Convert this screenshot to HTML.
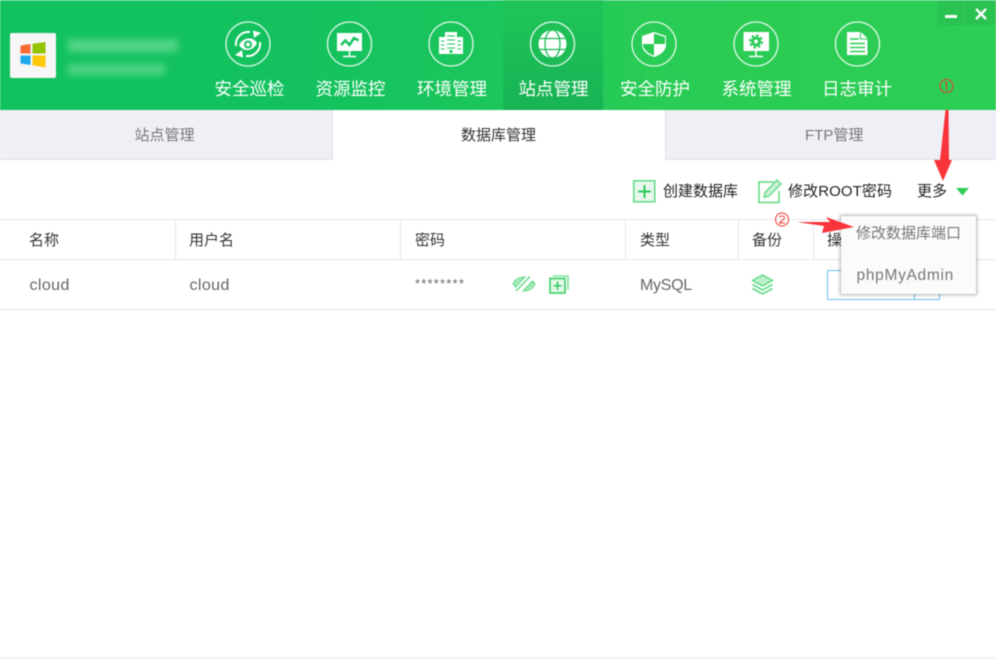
<!DOCTYPE html>
<html lang="zh"><head><meta charset="utf-8"><title>数据库管理</title>
<style>
html,body{margin:0;padding:0;background:#fff}
body{width:996px;height:669px;position:relative;overflow:hidden;font-family:"Liberation Sans","Noto Sans CJK SC",sans-serif;color:#333}
#wrap{position:absolute;left:0;top:0;width:996px;height:669px;filter:blur(.45px)}
.a{position:absolute;white-space:nowrap}
.t{position:absolute;white-space:nowrap;font-size:15px;line-height:20px}
.nav{position:absolute;top:78px;width:102px;text-align:center;color:#fff;font-size:17.5px;line-height:22px;white-space:nowrap}
.ln{position:absolute;background:#e6e8f0}
svg{position:absolute;overflow:visible}
.g{color:#666}
</style></head><body><div id="wrap">
<div class="a" style="left:0;top:0;width:996px;height:110px;background:linear-gradient(90deg,#12c25f 0%,#13c25f 30%,#1cc65c 50%,#29cc55 65%,#2dce54 100%)"></div>
<div class="a" style="left:0;top:0;width:996px;height:1px;background:#4fd08a"></div>
<div class="a" style="left:503px;top:0;width:100px;height:110px;background:linear-gradient(180deg,#20c558 0%,#18b355 100%)"></div>
<div class="a" style="left:938px;top:1px;width:25px;height:24px;background:#2ac251"></div>
<div class="a" style="left:964px;top:1px;width:32px;height:24px;background:#2ac251"></div>
<div class="a" style="left:945px;top:15px;width:12px;height:3px;background:#fff"></div>
<svg style="left:975px;top:8px" width="12" height="12" viewBox="0 0 12 12"><path d="M1 1L11 11M11 1L1 11" stroke="#fff" stroke-width="2.4"/></svg>
<div class="a" style="left:10px;top:33px;width:46px;height:45px;background:#f6f6f6;border-radius:2px"></div>
<svg style="left:20px;top:42px" width="26" height="26" viewBox="0 0 26 26"><path d="M0.500 3.500L10.500 2V11.500H0.500Z" fill="#f86b35"/><path d="M12.500 1.800L25.500 0V11.500H12.500Z" fill="#92c400"/><path d="M0.500 13.500H10.500V23L0.500 21.500Z" fill="#1ea9ee"/><path d="M12.500 13.500H25.500V25.500L12.500 23.300Z" fill="#ffc80a"/></svg>
<div class="a" style="left:68px;top:39px;width:110px;height:13px;background:#6edc9c;filter:blur(3.5px);opacity:.7"></div>
<div class="a" style="left:68px;top:64px;width:97px;height:11px;background:#6edc9c;filter:blur(3.5px);opacity:.65"></div>
<svg style="left:0;top:0" width="996" height="110" viewBox="0 0 996 110" fill="none" stroke="#fff" stroke-opacity=".85" stroke-width="1.300">
<circle cx="248" cy="44" r="22"/><circle cx="349.500" cy="44" r="22"/><circle cx="451" cy="44" r="22"/><circle cx="552.500" cy="44" r="22"/><circle cx="654" cy="44" r="22"/><circle cx="756" cy="44" r="22"/><circle cx="857.500" cy="44" r="22"/>
<g stroke-opacity="1">
<path d="M236 46a12.500 12.500 0 0 1 14-14M260 42a12.500 12.500 0 0 1-14 14" stroke-width="2"/>
<path d="M253 30.500L261 33 254 38ZM243 57.500L235 55 242 50Z" fill="#fff" stroke="none"/>
<path d="M239 45C243 37 253 36 257 43C253 52 243 52 239 45Z" fill="#fff" stroke="none"/>
<circle cx="248" cy="44.500" r="3" stroke="#14c35f" stroke-width="2"/>
<path d="M337 33H362V51H337Z" fill="#fff" stroke="none"/>
<path d="M349.500 51V56M343 56.500H356" stroke-width="1.500"/>
<path d="M341 45L345.500 40.500L349.500 45L354 38L358.500 40.500" stroke="#16c45e" stroke-width="2.500"/>
<path d="M445 32H457V37H463V54H439V37H445Z" fill="#fff" stroke="none"/>
<path d="M447 36H455M447 40H455M447 44H455M447 48H455M441 41H444.500M441 45H444.500M441 49H444.500M457.500 41H461M457.500 45H461M457.500 49H461" stroke="#1ac75c" stroke-width="1.100"/>
<path d="M449.500 50H452.500V53H449.500Z" fill="#1ac75c" stroke="none"/>
<circle cx="552.500" cy="44" r="14" fill="#fff" stroke="none"/>
<path d="M539 38.500H566M539 49.500H566" stroke="#1dbd58" stroke-width="1.300"/>
<ellipse cx="552.500" cy="44" rx="7.500" ry="14" stroke="#1dbd58" stroke-width="1.300"/>
<path d="M654 32L666 36V45C666 51 660 55 654 57C648 55 642 51 642 45V36Z" fill="#fff" stroke="none"/>
<path d="M654 33.500V44H665V37L654 33.500ZM654 44H643V46C644 50 649 54 654 55.500Z" fill="#29cb55" stroke="none"/>
<path d="M743.500 32H769V51H743.500Z" fill="#fff" stroke="none"/>
<path d="M756 51V56M749 56.500H763" stroke-width="1.500"/>
<circle cx="756" cy="41.500" r="3.500" stroke="#2acc55" stroke-width="3"/>
<circle cx="756" cy="41.500" r="6" stroke="#2acc55" stroke-width="2" stroke-dasharray="2.500 2.200"/>
<path d="M847 32H861L867.500 38.500V55H847Z" fill="#fff" stroke="none"/>
<path d="M860.500 32V39H867.500" stroke="#2ccd55" stroke-width="1"/>
<path d="M850 39H859M850 43.500H865M850 47.500H865M850 51.500H865" stroke="#2ccd55" stroke-width="1.400"/>
</g></svg>
<div class="nav" style="left:198.500px">安全巡检</div><div class="nav" style="left:299.500px">资源监控</div><div class="nav" style="left:401px">环境管理</div><div class="nav" style="left:502.500px">站点管理</div><div class="nav" style="left:604px">安全防护</div><div class="nav" style="left:705.500px">系统管理</div><div class="nav" style="left:806px">日志审计</div>
<div class="a" style="left:0;top:110px;width:332px;height:49px;background:#eff0f5;border-right:1px solid #dfe1ea;border-bottom:1px solid #dfe1ea"></div>
<div class="a" style="left:665px;top:110px;width:331px;height:49px;background:#eff0f5;border-left:1px solid #dfe1ea;border-bottom:1px solid #dfe1ea"></div>
<div class="t" style="left:134.500px;top:126px;color:#777">站点管理</div>
<div class="t" style="left:461px;top:126px;color:#333">数据库管理</div>
<div class="t" style="left:805px;top:126px;color:#777">FTP管理</div>
<svg style="left:633px;top:180px" width="23" height="23" viewBox="0 0 23 23"><rect x=".8" y=".8" width="21" height="21" fill="#e8f8ed" stroke="#5fd983" stroke-width="1.500"/><path d="M11.500 5V18M5 11.500H18" stroke="#2ccb58" stroke-width="2"/></svg>
<div class="t" style="left:663px;top:182px;color:#222">创建数据库</div>
<svg style="left:758px;top:179px" width="24" height="25" viewBox="0 0 24 25" fill="none"><path d="M16 3H1V23.500H21V12" stroke="#5fd983" stroke-width="1.500"/><path d="M19 1L23 5L11 17L6 18.500L7 13.500Z" fill="#c8f0d4" stroke="#5fd983" stroke-width="1.300"/></svg>
<div class="t" style="left:788px;top:182px;color:#222;letter-spacing:.1px">修改ROOT密码</div>
<div class="t" style="left:917px;top:182px;color:#222">更多</div>
<svg style="left:956px;top:188px" width="13" height="8"><path d="M0 0H13L6.500 7.500Z" fill="#2fcb57"/></svg>
<div class="ln" style="left:0;top:219px;width:996px;height:1px"></div>
<div class="ln" style="left:0;top:259px;width:996px;height:1px"></div>
<div class="ln" style="left:0;top:309px;width:996px;height:1px"></div>
<div class="ln" style="left:0;top:657px;width:996px;height:2px;background:#eeeef3"></div>
<div class="ln" style="left:175px;top:220px;width:1px;height:39px"></div>
<div class="ln" style="left:400px;top:220px;width:1px;height:39px"></div>
<div class="ln" style="left:625px;top:220px;width:1px;height:39px"></div>
<div class="ln" style="left:738px;top:220px;width:1px;height:39px"></div>
<div class="ln" style="left:813px;top:220px;width:1px;height:39px"></div>
<div class="t" style="left:29px;top:231px">名称</div><div class="t" style="left:189px;top:231px">用户名</div><div class="t" style="left:415px;top:231px">密码</div><div class="t" style="left:640px;top:231px">类型</div><div class="t" style="left:752px;top:231px">备份</div><div class="t" style="left:827px;top:231px">操作</div>
<div class="t g" style="left:29.500px;top:276px;font-size:16px;letter-spacing:.4px">cloud</div>
<div class="t g" style="left:189.500px;top:276px;font-size:16px;letter-spacing:.4px">cloud</div>
<div class="t g" style="left:415px;top:274px;font-size:13px;letter-spacing:1.2px">********</div>
<div class="t g" style="left:640px;top:276px;font-size:16px;letter-spacing:-.3px">MySQL</div>
<svg style="left:512px;top:275px" width="24" height="18" viewBox="0 0 24 18" fill="none"><path d="M1 9C3 4 8 2 13 2L3.500 12C2.500 11 2 10.500 1 9Z" fill="#a5e8b8" stroke="#5fd983"/><path d="M23 9C21 14 16 16 11 16L20.500 6C21.500 7 22 7.500 23 9Z" fill="#a5e8b8" stroke="#5fd983"/><path d="M4 16L18 1.500" stroke="#5fd983" stroke-width="1.300"/></svg>
<svg style="left:549px;top:275px" width="20" height="19" viewBox="0 0 20 19" fill="none"><path d="M4 1H19V15" stroke="#7fe09a" stroke-width="1.500"/><rect x="1" y="3.500" width="15" height="14.500" fill="#e4f8ea" stroke="#45d16d" stroke-width="1.700"/><path d="M8.500 6.500V15M4.500 10.800H12.500" stroke="#2ccb58" stroke-width="1.500"/></svg>
<svg style="left:751px;top:274px" width="23" height="21" viewBox="0 0 23 21" fill="none"><path d="M11.500 1L21.500 6.500L11.500 12L1.500 6.500Z" fill="#bdf0cb" stroke="#5fd983" stroke-width="1.400"/><path d="M1.500 10.500L11.500 16L21.500 10.500M1.500 14.500L11.500 20L21.500 14.500" stroke="#5fd983" stroke-width="1.600"/></svg>
<div class="a" style="left:827px;top:270px;width:111px;height:28px;border:1px solid #6cc1ee"></div>
<div class="a" style="left:914px;top:270px;width:1px;height:30px;background:#6cc1ee"></div>
<div class="a" style="left:841px;top:216px;width:135px;height:78px;background:#fbfbfa;box-shadow:0 0 3px 1px rgba(0,0,0,.32)"></div>
<div class="t g" style="left:856px;top:224px;color:#777">修改数据库端口</div>
<div class="t g" style="left:856.500px;top:266px;font-size:15.500px;letter-spacing:.7px;color:#777">phpMyAdmin</div>
<svg style="left:0;top:0" width="996" height="669" viewBox="0 0 996 669" fill="none">
<path d="M945.500 110L948.500 110L949 160L952 160L943 181L934 160L940 160Z" fill="#f9343a"/>
<path d="M797 222L830 222L826 217L854 227L822 233L824 226Z" fill="#f9343a"/>
<circle cx="946.500" cy="86" r="6.500" stroke="#f03a32"/>
<path d="M946.500 82V90M945 83.500L946.500 82" stroke="#f03a32"/>
<circle cx="782" cy="219.500" r="6.500" stroke="#f03a32"/>
<path d="M779.500 217.500C780 215.500 784.500 215.500 784.500 218C784.500 219.500 780 221.500 779.500 223H785" stroke="#f03a32"/>
</svg>
</div></body></html>
